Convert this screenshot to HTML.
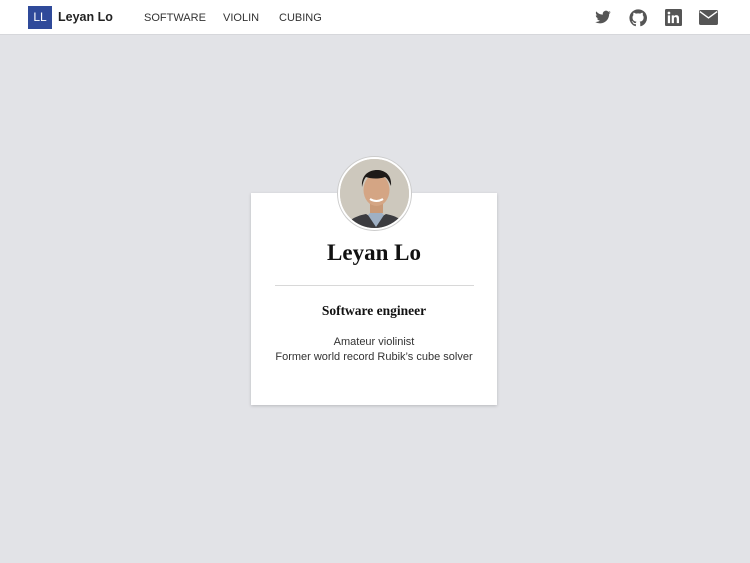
<!DOCTYPE html>
<html><head><meta charset="utf-8"><style>
*{margin:0;padding:0;box-sizing:border-box}
body{width:750px;height:563px;background:#e2e3e7;font-family:"Liberation Sans",sans-serif;position:relative;overflow:hidden}
.nav{position:absolute;left:0;top:0;width:750px;height:35px;background:#fff;border-bottom:1px solid #d6d7db}
.logo{position:absolute;left:28px;top:6px;width:24px;height:23px;background:#2f4a9a;color:#fff;font-size:12px;line-height:23px;text-align:center}
.brand{position:absolute;left:58px;top:10px;font-size:12.5px;font-weight:bold;color:#222}
.link{position:absolute;top:12px;font-size:11px;color:#333}
.ic{position:absolute;top:9px}
.card{position:absolute;left:251px;top:193px;width:246px;height:212px;background:#fff;box-shadow:0 1px 3px rgba(0,0,0,.18)}
.av{position:absolute;left:338px;top:157px;width:73px;height:73px;border-radius:50%;border:2px solid #fff;box-shadow:0 0 0 1px #ccc;overflow:hidden;background:#cfcac0}
h1{position:absolute;left:251px;width:246px;top:240px;text-align:center;font-family:"Liberation Serif",serif;font-size:23px;font-weight:bold;color:#111}
.hr{position:absolute;left:275px;top:285px;width:199px;height:1px;background:#d8d8d8}
h2{position:absolute;left:251px;width:246px;top:303px;text-align:center;font-family:"Liberation Serif",serif;font-size:13.5px;font-weight:bold;color:#111}
.p{position:absolute;left:251px;width:246px;top:335px;text-align:center;font-size:11px;line-height:15px;color:#333}
</style></head><body>
<div class="nav">
<div class="logo">LL</div><div class="brand">Leyan Lo</div>
<div class="link" style="left:144px">SOFTWARE</div>
<div class="link" style="left:223px">VIOLIN</div>
<div class="link" style="left:279px">CUBING</div>
<svg class="ic" style="left:594px" width="18" height="17" viewBox="0 0 24 24"><path fill="#555" d="M23 4.6a9 9 0 0 1-2.6.7 4.6 4.6 0 0 0 2-2.5 9 9 0 0 1-2.9 1.1A4.5 4.5 0 0 0 11.8 8 12.8 12.8 0 0 1 2.5 3.300a4.5 4.5 0 0 0 1.4 6 4.5 4.5 0 0 1-2-.6 4.5 4.5 0 0 0 3.6 4.5 4.5 4.5 0 0 1-2 .1 4.5 4.5 0 0 0 4.2 3.1A9 9 0 0 1 1 18.3 12.8 12.8 0 0 0 7.9 20.3c8.3 0 12.8-6.9 12.8-12.8v-.6A9 9 0 0 0 23 4.6z"/></svg>
<svg class="ic" style="left:629px" width="18" height="18" viewBox="0 0 24 24"><path fill="#555" d="M12 .5a11.5 11.5 0 0 0-3.6 22.4c.6.1.8-.2.8-.6v-2.2c-3.2.7-3.9-1.4-3.9-1.4-.5-1.3-1.3-1.700-1.300-1.700-1-.7.1-.7.1-.7 1.2.1 1.8 1.2 1.8 1.2 1 1.8 2.7 1.3 3.4 1 .1-.8.4-1.3.7-1.6-2.6-.3-5.3-1.3-5.3-5.7 0-1.3.5-2.3 1.2-3.1-.1-.3-.5-1.5.1-3.1 0 0 1-.3 3.2 1.2a11 11 0 0 1 5.8 0c2.2-1.5 3.2-1.2 3.2-1.2.6 1.6.2 2.8.1 3.1.7.8 1.2 1.8 1.2 3.1 0 4.4-2.7 5.4-5.3 5.7.4.4.8 1.1.8 2.2v3.3c0 .3.2.7.8.6A11.5 11.5 0 0 0 12 .5z"/></svg>
<svg class="ic" style="left:665px" width="17" height="17" viewBox="0 0 24 24"><rect width="24" height="24" rx="2" fill="#555"/><rect x="4" y="9" width="3.2" height="11" fill="#fff"/><circle cx="5.6" cy="5.6" r="1.9" fill="#fff"/><path fill="#fff" d="M9.5 9h3v1.5c.5-.9 1.6-1.8 3.4-1.8 3.3 0 3.9 2.1 3.9 4.9V20h-3.2v-5.6c0-1.3 0-3-1.9-3s-2.1 1.4-2.1 2.9V20H9.5z"/></svg>
<svg class="ic" style="left:699px;top:10px" width="19" height="15" viewBox="0 0 24 19"><rect width="24" height="19" rx="2" fill="#555"/><path d="M1 2l11 8 11-8" stroke="#fff" stroke-width="1.8" fill="none"/></svg>
</div>
<div class="card"></div>
<div class="av"><svg width="73" height="73" viewBox="0 0 73 73">
<rect width="73" height="73" fill="#cdc8bd"/>
<path d="M4 73c2-12 12-16 22-18l10 6 10-6c10 2 20 6 22 18z" fill="#3c3c40"/>
<path d="M28 56l8 12 8-12-4-4h-8z" fill="#9fb0c4"/>
<rect x="30" y="40" width="13" height="14" fill="#c99a78"/>
<ellipse cx="36.5" cy="31" rx="13" ry="16" fill="#d4a584"/>
<path d="M22 28c-1-12 7-17 15-17s15 5 14 16c-2-5-4-8-6-9-5 2-14 2-19 0-2 2-3 6-4 10z" fill="#1e1a18"/>
<path d="M30 40q6.5 4 13 0" stroke="#fff" stroke-width="2" fill="none"/>
</svg></div>
<h1>Leyan Lo</h1>
<div class="hr"></div>
<h2>Software engineer</h2>
<div class="p">Amateur violinist<br>Former world record Rubik’s cube solver</div>
</body></html>
